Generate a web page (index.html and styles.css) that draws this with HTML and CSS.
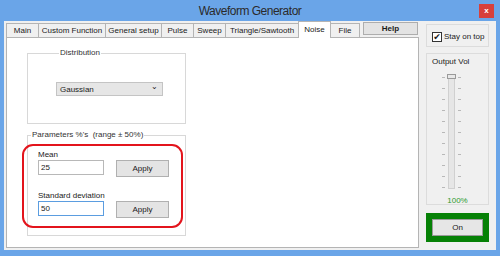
FILE: index.html
```html
<!DOCTYPE html>
<html lang="en">
<head>
  <meta charset="UTF-8">
  <meta name="viewport" content="width=device-width, initial-scale=1.0">
  <title>Waveform Generator</title>
  <link rel="stylesheet" href="styles.css">
</head>
<body>
  <div class="window">
    <div class="titlebar">
      <span class="title">Waveform Generator</span>
      <span class="close">x</span>
    </div>

    <div class="content">
      <div class="tabcontrol">
        <div class="tabs">
          <div class="tab" style="width:33px">Main</div>
          <div class="tab" style="width:67px">Custom Function</div>
          <div class="tab" style="width:56px">General setup</div>
          <div class="tab" style="width:32px">Pulse</div>
          <div class="tab" style="width:32px">Sweep</div>
          <div class="tab" style="width:73px">Triangle/Sawtooth</div>
          <div class="tab active" style="width:33px">Noise</div>
          <div class="tab" style="width:29px">File</div>
          <button class="help">Help</button>
        </div>

        <div class="panel">
          <fieldset class="group dist">
            <legend>Distribution</legend>
            <div class="select">
              <span>Gaussian</span>
              <span class="arrow">&#8964;</span>
            </div>
          </fieldset>

          <fieldset class="group params">
            <legend>Parameters %'s&nbsp; (range &plusmn; 50%)</legend>
            <div class="highlight">
              <div class="label">Mean</div>
              <div class="row">
                <input class="field" type="text" value="25">
                <button class="btn">Apply</button>
              </div>
              <div class="label second">Standard deviation</div>
              <div class="row">
                <input class="field focus" type="text" value="50">
                <button class="btn">Apply</button>
              </div>
            </div>
          </fieldset>
        </div>
      </div>

      <div class="side">
        <div class="box stay">
          <span class="check">&#10004;</span>
          <span>Stay on top</span>
        </div>

        <div class="box vol">
          <div class="vol-label">Output Vol</div>
          <div class="slider">
            <div class="ticks">
              <i></i><i></i><i></i><i></i><i></i><i></i><i></i><i></i><i></i><i></i><i></i>
            </div>
            <div class="track"><div class="thumb"></div></div>
            <div class="ticks">
              <i></i><i></i><i></i><i></i><i></i><i></i><i></i><i></i><i></i><i></i><i></i>
            </div>
          </div>
          <div class="percent">100%</div>
        </div>

        <div class="onframe">
          <button class="onbtn">On</button>
        </div>
      </div>
    </div>
  </div>
</body>
</html>
```

FILE: styles.css
```css
/* Window frame */
body {
  margin: 0;
  background-color: #6aa5e8;
  font-family: 'Liberation Sans', Arial, sans-serif;
  font-size: 8px;
  color: #1a1a1a;
}

.window {
  width: 500px;
  height: 256px;
  padding: 0 4px 6px 4px;
  box-sizing: border-box;
  display: flex;
  flex-direction: column;
}

.titlebar {
  height: 21px;
  display: flex;
  align-items: center;
  justify-content: center;
  position: relative;
}

.title {
  font-size: 12px;
  letter-spacing: -0.5px;
  color: #2a2a2a;
  margin-top: 1px;
}

.close {
  position: absolute;
  right: 2px;
  top: 4px;
  width: 15px;
  height: 14px;
  background-color: #d7403c;
  color: #fff;
  font-size: 8px;
  font-weight: bold;
  line-height: 14px;
  text-align: center;
}

.content {
  flex: 1;
  display: flex;
  background-color: #f0f0f0;
  padding-left: 2px;
}

/* Tabs */
.tabcontrol {
  width: 413px;
  display: flex;
  flex-direction: column;
  padding-bottom: 2px;
}

.tabs {
  height: 17px;
  display: flex;
  align-items: flex-end;
  margin-top: -1px;
}

.tab {
  height: 14px;
  line-height: 13px;
  box-sizing: border-box;
  border: 1px solid #b4b4b4;
  border-bottom: none;
  border-left: none;
  background-color: #f0f0f0;
  text-align: center;
  white-space: nowrap;
  overflow: hidden;
}

.tab:first-child {
  border-left: 1px solid #b4b4b4;
}

.tab.active {
  height: 17px;
  line-height: 15px;
  background-color: #fff;
  border-left: 1px solid #b4b4b4;
  margin-left: -1px;
  position: relative;
  top: 1px;
}

.help {
  width: 55px;
  height: 13px;
  margin: 0 0 2px 3px;
  padding: 0;
  border: 1px solid #adadad;
  background-color: #e3e3e3;
  font-family: inherit;
  font-size: 8px;
  font-weight: bold;
  line-height: 11px;
  color: #1a1a1a;
}

.panel {
  flex: 1;
  background-color: #fff;
  border: 1px solid #b4b4b4;
  padding-left: 20px;
}

/* Group boxes */
.group {
  width: 159px;
  box-sizing: border-box;
  margin: 0;
  border: 1px solid #d8d8d8;
  padding: 0;
}

.group legend {
  margin-left: 3px;
  padding: 0 1px;
  line-height: 10px;
  color: #333;
}

.dist {
  margin-top: 10px;
  padding: 24px 0 27px 28px;
}

.select {
  width: 107px;
  height: 14px;
  box-sizing: border-box;
  border: 1px solid #c4c4c4;
  background-color: #e6e6e6;
  display: flex;
  align-items: center;
  justify-content: space-between;
  padding: 0 4px 0 3px;
}

.arrow {
  font-size: 8px;
  line-height: 8px;
  margin-top: -4px;
}

.params {
  margin-top: 6px;
  height: 106px;
}

.highlight {
  width: 161px;
  height: 84px;
  box-sizing: border-box;
  margin: 4px 0 0 -6px;
  border: 2px solid #e3141c;
  border-radius: 11px;
  padding: 4px 0 0 14px;
}

.label {
  line-height: 10px;
}

.label.second {
  margin-top: 14px;
}

.row {
  display: flex;
  align-items: flex-start;
  gap: 12px;
}

.field {
  width: 66px;
  height: 15px;
  box-sizing: border-box;
  margin: 0;
  border: 1px solid #b8b8b8;
  padding: 0 2px;
  font-family: inherit;
  font-size: 8px;
  color: #1a1a1a;
}

.field.focus {
  border-color: #5b9de0;
}

.btn {
  width: 53px;
  height: 17px;
  margin: 0;
  padding: 0;
  border: 1px solid #b0b0b0;
  background-color: #e4e4e4;
  font-family: inherit;
  font-size: 8px;
  color: #1a1a1a;
}

/* Right side */
.side {
  flex: 1;
  padding: 3px 7px 0 7px;
  display: flex;
  flex-direction: column;
}

.box {
  border: 1px solid #dcdcdc;
  box-sizing: border-box;
}

.stay {
  height: 23px;
  display: flex;
  align-items: center;
  gap: 2px;
  padding: 2px 0 0 5px;
}

.check {
  width: 10px;
  height: 10px;
  box-sizing: border-box;
  border: 1px solid #333;
  background-color: #fff;
  font-size: 9px;
  line-height: 8px;
  text-align: center;
  font-family: 'DejaVu Sans', sans-serif;
}

.vol {
  margin-top: 6px;
  height: 152px;
  padding: 3px 0 0 5px;
}

.vol-label {
  line-height: 10px;
}

.slider {
  display: flex;
  height: 115px;
  margin: 7px 0 0 10px;
  gap: 2px;
}

.ticks {
  width: 3px;
  padding: 3px 0 1px 0;
  display: flex;
  flex-direction: column;
  justify-content: space-between;
}

.ticks i {
  display: block;
  height: 1px;
  background-color: #b8b8b8;
}

.track {
  width: 7px;
  margin: 0 1px;
  box-sizing: border-box;
  border: 1px solid #d0d0d0;
  background-color: #e6e6e6;
  display: flex;
  justify-content: center;
}

.thumb {
  width: 9px;
  height: 5px;
  flex: none;
  box-sizing: border-box;
  border: 1px solid #9a9a9a;
  background-color: #e8e8e8;
  margin-top: -1px;
}

.percent {
  margin-top: 7px;
  line-height: 10px;
  text-align: center;
  color: #2f9a2f;
  padding-right: 5px;
}

.onframe {
  margin-top: 8px;
  height: 29px;
  background-color: #068106;
  padding: 6px 6px;
  box-sizing: border-box;
}

.onbtn {
  width: 100%;
  height: 17px;
  margin: 0;
  padding: 0;
  border: 1px solid #9a9a9a;
  background-color: #e6e6e6;
  font-family: inherit;
  font-size: 8px;
  color: #1a1a1a;
}
```
